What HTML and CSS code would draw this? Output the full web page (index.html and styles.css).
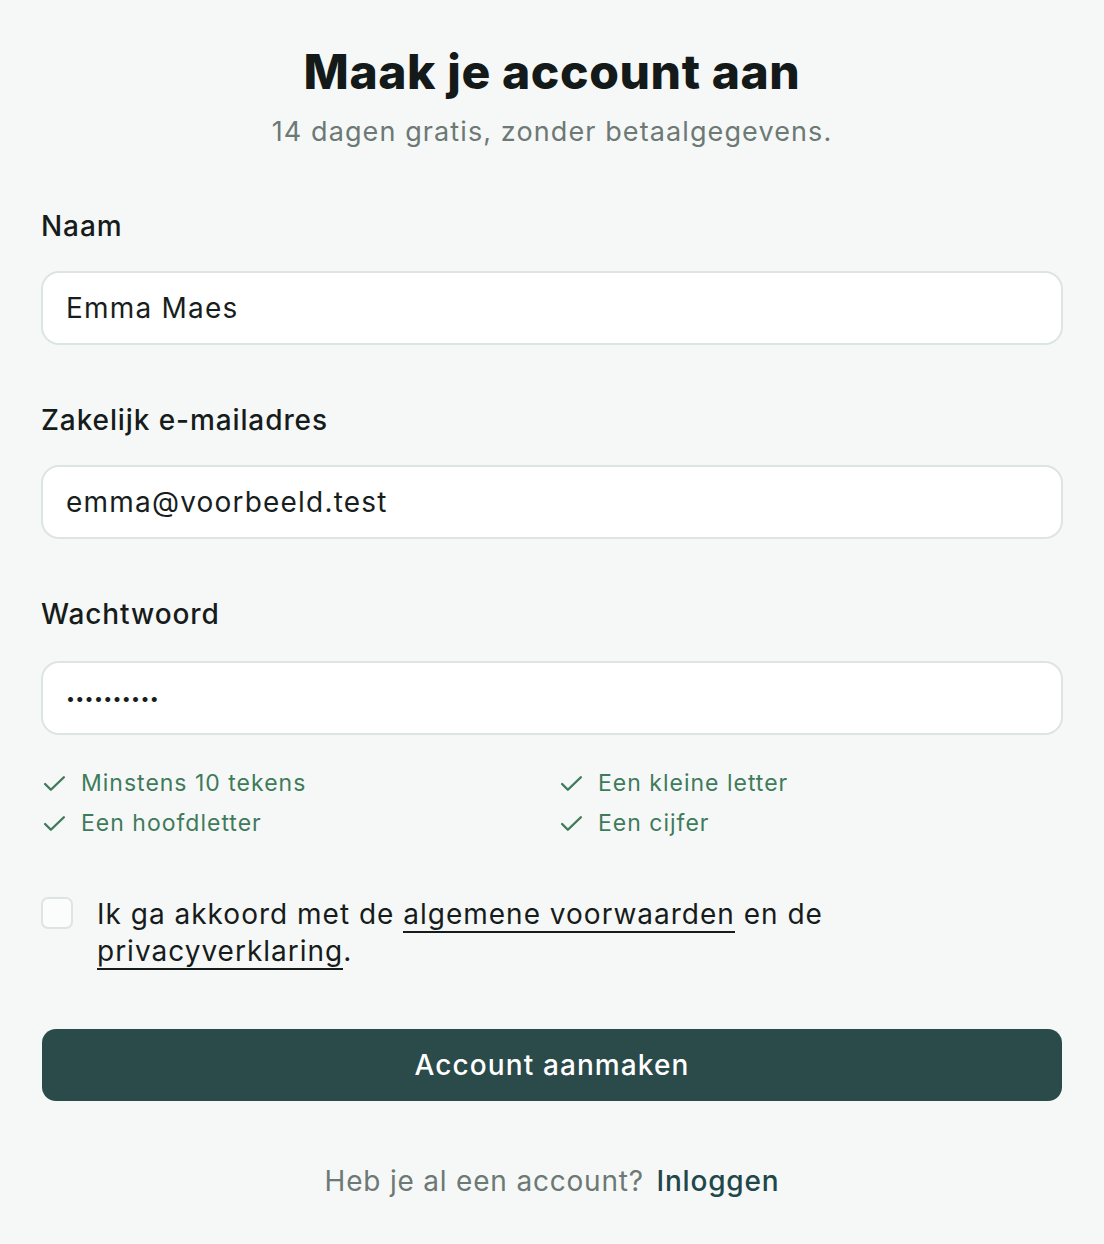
FILE: index.html
```html
<!DOCTYPE html>
<html lang="nl">
<head>
<meta charset="utf-8">
<title>Maak je account aan</title>
<link rel="stylesheet" href="styles.css">
</head>
<body>
<main class="page">
  <header class="head">
    <h1 class="title">Maak je account aan</h1>
    <p class="subtitle">14 dagen gratis, zonder betaalgegevens.</p>
  </header>
  <form class="form">
    <div class="field">
      <label class="label">Naam</label>
      <div class="input">Emma Maes</div>
    </div>
    <div class="field">
      <label class="label">Zakelijk e-mailadres</label>
      <div class="input">emma@voorbeeld.test</div>
    </div>
    <div class="field field-last">
      <label class="label">Wachtwoord</label>
      <div class="input input-pw">••••••••••</div>
    </div>
    <ul class="rules">
      <li class="rule"><svg class="check" viewBox="0 0 24 24"><path d="M3 12.5l5.5 5.5L21 6"/></svg>Minstens 10 tekens</li>
      <li class="rule"><svg class="check" viewBox="0 0 24 24"><path d="M3 12.5l5.5 5.5L21 6"/></svg>Een kleine letter</li>
      <li class="rule"><svg class="check" viewBox="0 0 24 24"><path d="M3 12.5l5.5 5.5L21 6"/></svg>Een hoofdletter</li>
      <li class="rule"><svg class="check" viewBox="0 0 24 24"><path d="M3 12.5l5.5 5.5L21 6"/></svg>Een cijfer</li>
    </ul>
    <div class="terms">
      <span class="box"></span>
      <p class="terms-text">Ik ga akkoord met de <a class="ulink">algemene voorwaarden</a> en de <a class="ulink">privacyverklaring</a>.</p>
    </div>
    <button type="button" class="btn">Account aanmaken</button>
  </form>
  <p class="footer">Heb je al een account? <a class="login">Inloggen</a></p>
</main>
</body>
</html>
```

FILE: styles.css
```css
* { box-sizing: border-box; }
html, body { margin: 0; padding: 0; }
body {
  background: #f6f8f7;
  font-family: Inter, "Noto Sans", sans-serif;
  color: #161c1b;
}
.page {
  width: 1104px;
  padding: 42px 41px 0;
  display: flex;
  flex-direction: column;
}
.head { text-align: center; }
.title {
  margin: 0;
  font-size: 48px;
  line-height: 60px;
  font-weight: 800;
  letter-spacing: 0.6px;
  color: #141a19;
}
.subtitle {
  margin: 0;
  font-size: 27px;
  line-height: 60px;
  letter-spacing: 1.1px;
  color: #6c7975;
}
.form {
  display: flex;
  flex-direction: column;
  margin-top: 48px;
}
.field {
  display: flex;
  flex-direction: column;
  gap: 29px;
  margin-bottom: 59px;
}
.field-last { margin-bottom: 0; gap: 31px; }
.label {
  font-size: 28px;
  line-height: 32px;
  font-weight: 500;
  letter-spacing: 0.9px;
  color: #161c1b;
}
.input {
  height: 74px;
  border: 2px solid #dde5e2;
  border-radius: 18px;
  background: #fff;
  padding: 0 23px;
  display: flex;
  align-items: center;
  font-size: 28px;
  letter-spacing: 1.2px;
  color: #181e1d;
}
.input-pw { font-size: 16px; letter-spacing: 0.3px; }
.rules {
  list-style: none;
  margin: 28px 0 0;
  padding: 0;
  display: grid;
  grid-template-columns: 517px 1fr;
}
.rule {
  display: flex;
  align-items: center;
  height: 40px;
  font-size: 23px;
  letter-spacing: 1px;
  color: #3f7b5b;
}
.check {
  width: 25px;
  height: 25px;
  margin: 0 14px 0 1px;
  fill: none;
  stroke: #3f7b5b;
  stroke-width: 2.3;
  stroke-linecap: round;
  stroke-linejoin: round;
}
.terms {
  display: flex;
  gap: 24px;
  margin-top: 53px;
}
.box {
  flex: none;
  width: 32px;
  height: 32px;
  margin-top: 1px;
  border: 2px solid #dde5e2;
  border-radius: 7px;
  background: #fbfcfc;
}
.terms-text {
  margin: 0;
  max-width: 800px;
  font-size: 28px;
  line-height: 37px;
  letter-spacing: 1px;
  color: #161c1b;
}
.ulink {
  color: inherit;
  text-decoration: none;
  border-bottom: 2px solid #161c1b;
}
.btn {
  margin: 59px 1px 0;
  height: 72px;
  border: 0;
  border-radius: 14px;
  background: #2a4b4a;
  color: #fff;
  font-family: inherit;
  font-size: 28px;
  font-weight: 500;
  letter-spacing: 1.1px;
}
.footer {
  margin: 62px 0 0;
  text-align: center;
  font-size: 28px;
  line-height: 36px;
  letter-spacing: 0.8px;
  color: #6c7975;
}
.login {
  color: #22474a;
  font-weight: 500;
  margin-left: 4px;
}
```
